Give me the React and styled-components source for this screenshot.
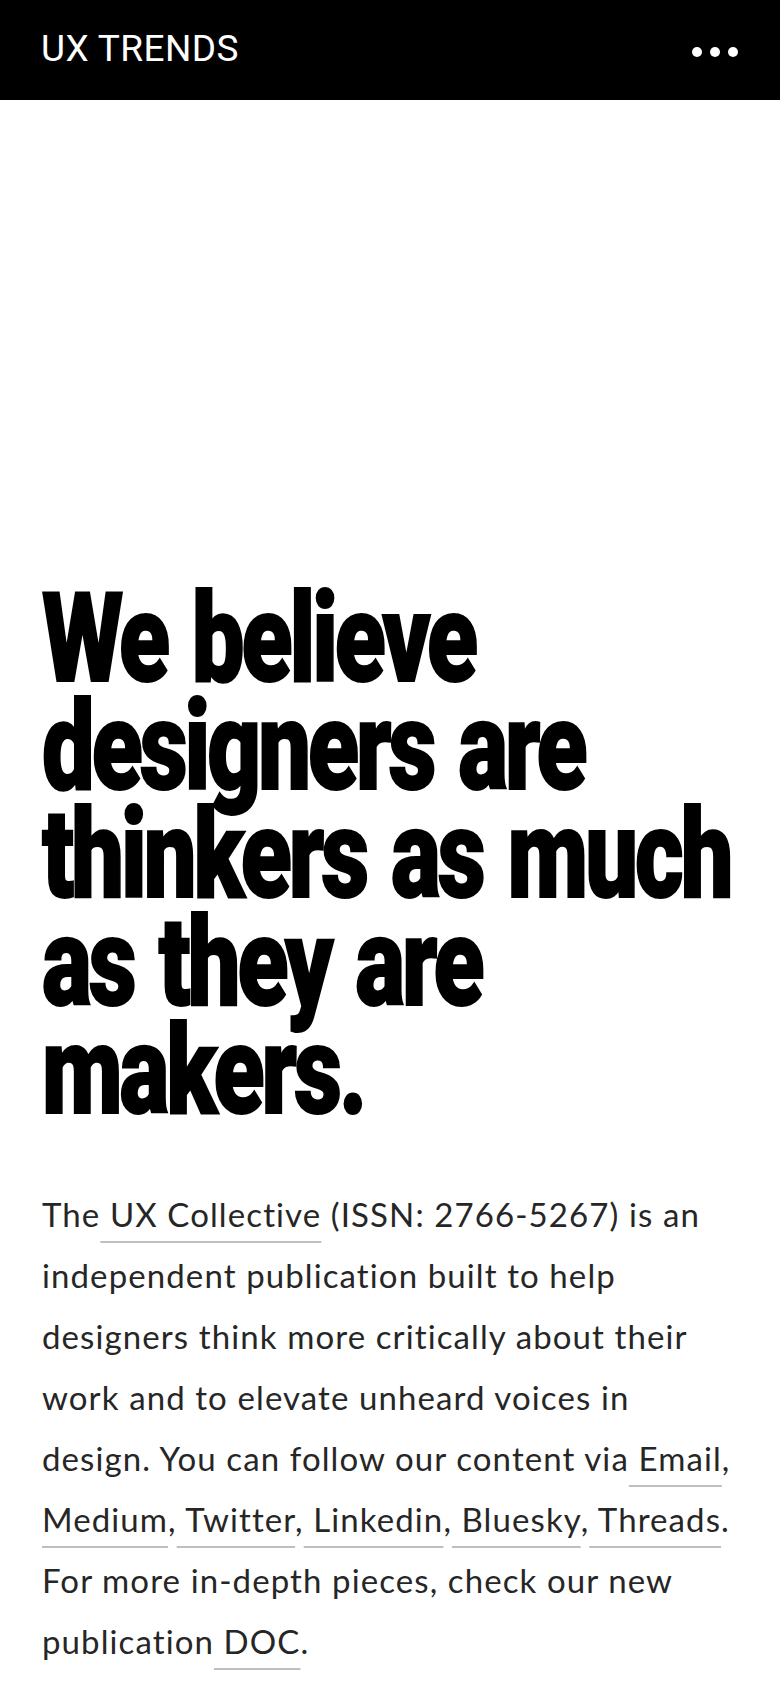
import React from "react";
import styled, { createGlobalStyle } from "styled-components";

const GlobalStyle = createGlobalStyle`
  html, body {
    margin: 0;
    padding: 0;
    background: #fff;
  }
  * {
    box-sizing: border-box;
  }
`;

const Page = styled.div`
  width: 780px;
  min-height: 1688px;
  background: #fff;
`;

const TopBar = styled.header`
  height: 100px;
  background: #000;
  display: flex;
  align-items: center;
  justify-content: space-between;
  padding: 0 42px 3px 41px;
`;

const Brand = styled.div`
  font-family: Roboto, "Liberation Sans", sans-serif;
  font-size: 37px;
  font-weight: 400;
  color: #fff;
  letter-spacing: 0.4px;
`;

const MoreButton = styled.button`
  display: flex;
  gap: 8px;
  padding: 0;
  margin: 6px 0 0;
  border: 0;
  background: none;
  cursor: pointer;
`;

const Dot = styled.span`
  width: 10px;
  height: 10px;
  border-radius: 50%;
  background: #fff;
`;

const Main = styled.main`
  padding: 485px 42px 40px;
`;

const Headline = styled.h1`
  margin: 0;
  font-family: Roboto, "Liberation Sans", sans-serif;
  font-size: 124px;
  font-weight: 900;
  line-height: 108px;
  color: #000;
  letter-spacing: -4px;
  word-spacing: 6px;
  -webkit-text-stroke: 2px #000;
  transform: scaleX(0.755);
  transform-origin: left top;
`;

const HeadLine = styled.span`
  display: block;
  white-space: nowrap;
`;

const About = styled.p`
  margin: 59px 0 0;
  font-family: Lato, "Open Sans", sans-serif;
  font-size: 33px;
  line-height: 61px;
  letter-spacing: 1.1px;
  font-variant-ligatures: none;
  color: #262626;
`;

const Link = styled.a`
  color: inherit;
  text-decoration: underline;
  text-decoration-color: #bfbfbf;
  text-decoration-thickness: 2px;
  text-underline-offset: 14px;
  text-decoration-skip-ink: none;
`;

const headlineLines = [
  "We believe",
  "designers are",
  "thinkers as much",
  "as they are",
  "makers.",
];

const App = () => {
  return (
    <Page>
      <GlobalStyle />
      <TopBar>
        <Brand>UX TRENDS</Brand>
        <MoreButton aria-label="More">
          <Dot />
          <Dot />
          <Dot />
        </MoreButton>
      </TopBar>
      <Main>
        <Headline>
          {headlineLines.map((line) => (
            <HeadLine key={line}>{line}</HeadLine>
          ))}
        </Headline>
        <About>
          The<Link href="#"> UX Collective</Link> (ISSN: 2766-5267) is an
          independent publication built to help designers think more
          critically about their work and to elevate unheard voices in design.
          You can follow our content via<Link href="#"> Email</Link>,
          <Link href="#"> Medium</Link>,<Link href="#"> Twitter</Link>,
          <Link href="#"> Linkedin</Link>,<Link href="#"> Bluesky</Link>,
          <Link href="#"> Threads</Link>. For more in-depth pieces, check our
          new publication<Link href="#"> DOC</Link>.
        </About>
      </Main>
    </Page>
  );
};

export default App;
